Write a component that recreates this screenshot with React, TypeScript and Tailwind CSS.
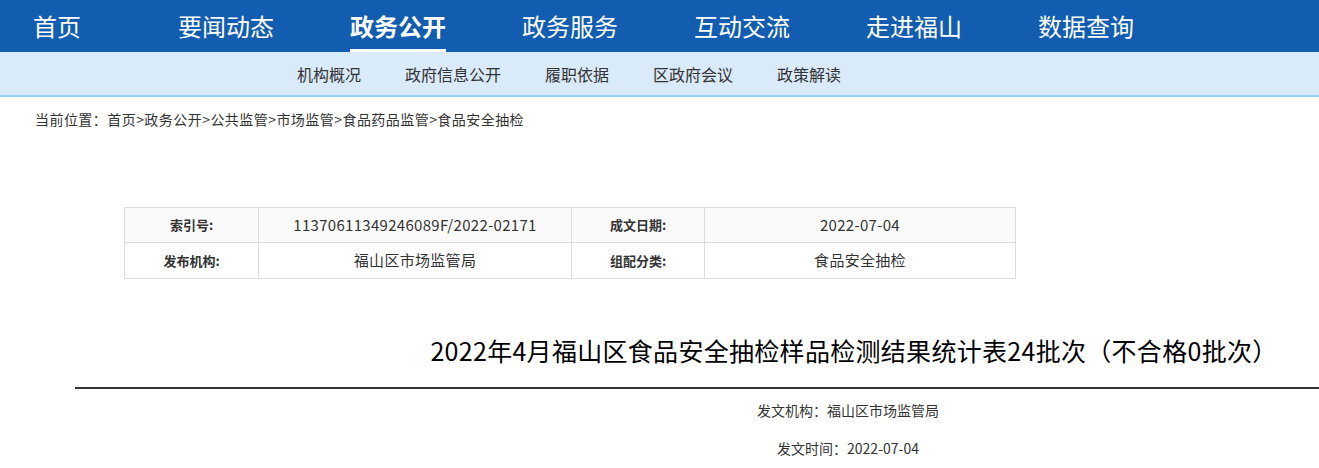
import React from "react";

const font = { fontFamily: '"Microsoft YaHei", "Noto Sans CJK SC", "Noto Sans", sans-serif' };

export default function App() {
  const nav = ["要闻动态", "政务公开", "政务服务", "互动交流", "走进福山", "数据查询"];
  const sub = ["机构概况", "政府信息公开", "履职依据", "区政府会议", "政策解读"];
  return (
    <div className="w-[1319px] h-[468px] overflow-hidden bg-white text-[#333]" style={font}>
      <div className="h-[52px] bg-[#125daf] flex items-stretch text-white">
        <div className="w-[178px] pl-[33px] flex items-center text-[24px]">首页</div>
        {nav.map((n) => (
          <div key={n} className="w-[172px] flex items-stretch">
            <div
              className={
                "flex items-center text-[24px] border-b-[3px] " +
                (n === "政务公开" ? "font-bold border-white" : "border-transparent")
              }
            >
              <span className="pt-[3px]">{n}</span>
            </div>
          </div>
        ))}
      </div>
      <div className="h-[45px] bg-[#d9eafa] border-b-2 border-[#9dcff7] flex items-center pl-[297px] gap-[44px] text-[16px] text-[#333]">
        {sub.map((s) => (
          <span key={s}>{s}</span>
        ))}
      </div>
      <div className="pl-[35px] pt-[12px] text-[14px] leading-[20px] text-[#333] tracking-[0.45px]">
        当前位置：首页&gt;政务公开&gt;公共监管&gt;市场监管&gt;食品药品监管&gt;食品安全抽检
      </div>
      <div className="pl-[124px] pt-[78px]">
        <table className="border-collapse text-[15px] tracking-[0.3px] text-[#333] w-[891px] table-fixed">
          <colgroup>
            <col className="w-[134px]" />
            <col className="w-[313px]" />
            <col className="w-[133px]" />
            <col className="w-[311px]" />
          </colgroup>
          <tbody>
            <tr className="bg-[#fafafa] h-[35px]">
              <td className="border border-[#ddd] text-center font-bold text-[13px] tracking-normal">索引号:</td>
              <td className="border border-[#ddd] text-center">11370611349246089F/2022-02171</td>
              <td className="border border-[#ddd] text-center font-bold text-[13px] tracking-normal">成文日期:</td>
              <td className="border border-[#ddd] text-center">2022-07-04</td>
            </tr>
            <tr className="bg-white h-[36px]">
              <td className="border border-[#ddd] text-center font-bold text-[13px] tracking-normal">发布机构:</td>
              <td className="border border-[#ddd] text-center">福山区市场监管局</td>
              <td className="border border-[#ddd] text-center font-bold text-[13px] tracking-normal">组配分类:</td>
              <td className="border border-[#ddd] text-center">食品安全抽检</td>
            </tr>
          </tbody>
        </table>
      </div>
      <div className="ml-[75px] w-[1546px]">
        <div className="pt-[53px] pl-[12px] h-[108px] text-center text-[25px] leading-[36px] text-black tracking-[0.3px]">
          2022年4月福山区食品安全抽检样品检测结果统计表24批次（不合格0批次）
        </div>
        <div className="h-[2px] bg-[#333]" />
        <div className="pt-[11px] text-center text-[14px] leading-[20px] text-[#333]">
          发文机构：福山区市场监管局
        </div>
        <div className="pt-[18px] text-center text-[14px] leading-[20px] text-[#333]">
          发文时间：2022-07-04
        </div>
      </div>
    </div>
  );
}
